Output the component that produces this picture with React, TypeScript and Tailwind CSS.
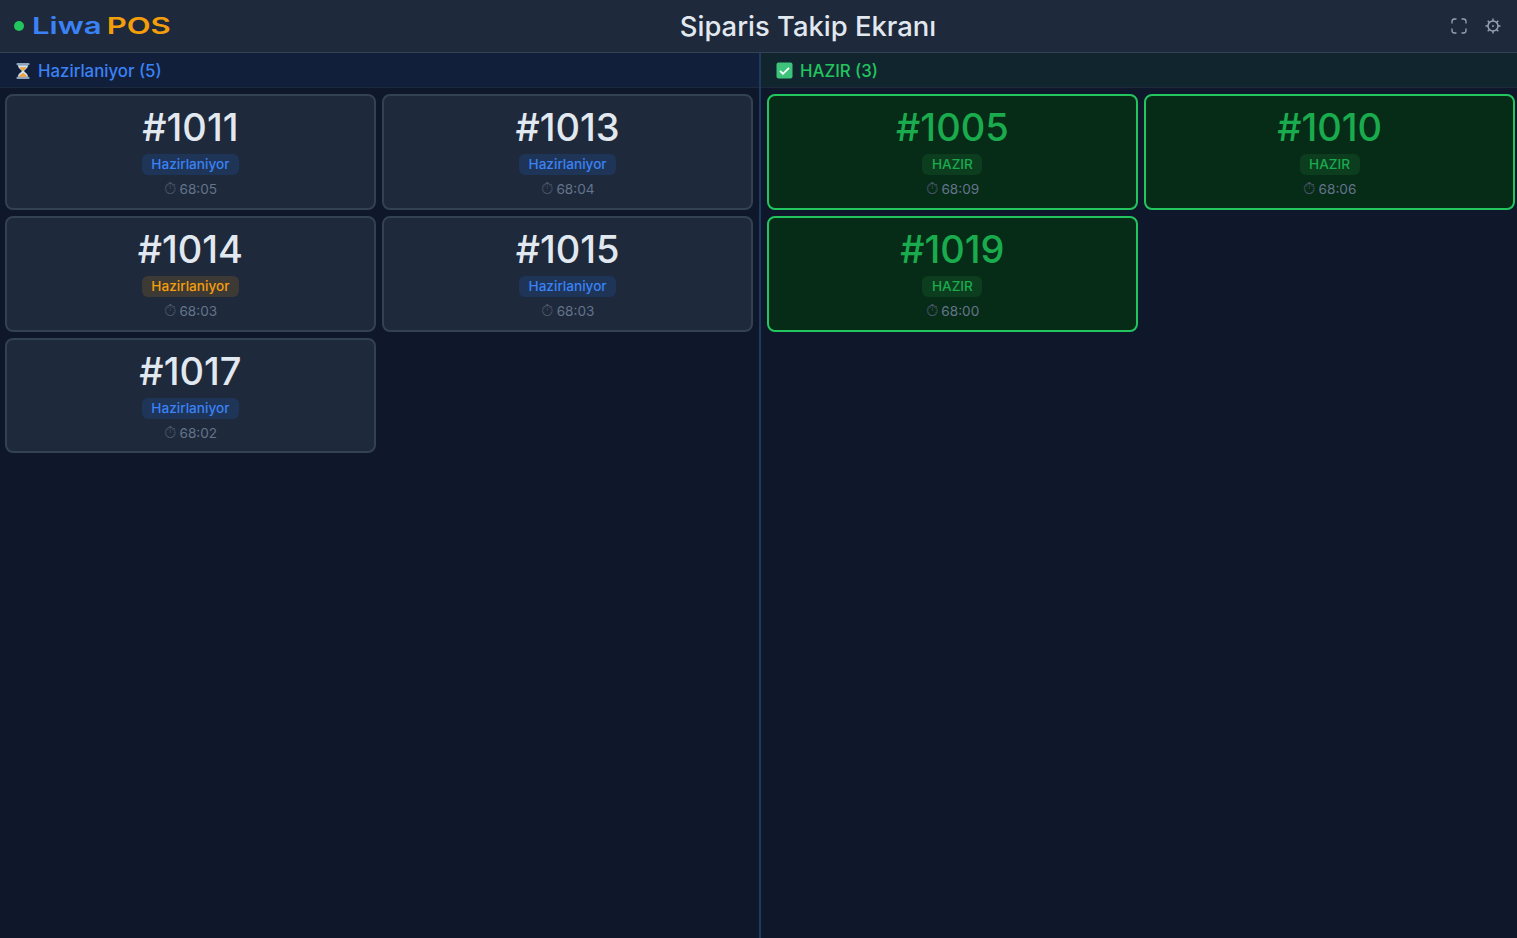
type Order = { no: string; time: string; late?: boolean };

const preparing: Order[] = [
  { no: "#1011", time: "68:05" },
  { no: "#1013", time: "68:04" },
  { no: "#1014", time: "68:03", late: true },
  { no: "#1015", time: "68:03" },
  { no: "#1017", time: "68:02" },
];

const ready: Order[] = [
  { no: "#1005", time: "68:09" },
  { no: "#1010", time: "68:06" },
  { no: "#1019", time: "68:00" },
];

function OrderCard({ order, done }: { order: Order; done?: boolean }) {
  const pill = done
    ? "bg-[#0c3d1e] text-[#1aab4e]"
    : order.late
      ? "bg-[#3d3a35] text-[#f59e0b]"
      : "bg-[#1e3558] text-[#3b82f6]";
  return (
    <div
      className={`flex h-[115.6px] flex-col items-center rounded-lg border-2 pt-[5.8px] ${
        done ? "border-[#22c55e] bg-[#062b16]" : "border-[#334155] bg-[#1e293b]"
      }`}
    >
      <div className={`text-[38px] leading-[50px] font-medium ${done ? "text-[#1aab4e]" : "text-[#e2e8f0]"}`}>
        {order.no}
      </div>
      <div className={`mt-[2.5px] h-[20.8px] rounded-md px-[9.5px] text-[13.6px] leading-[21.8px] font-medium ${pill}`}>
        {done ? "HAZIR" : "Hazirlaniyor"}
      </div>
      <div className="mt-[3.7px] text-[13.6px] leading-5 text-[#64748b]">
        <span className="text-[16px] leading-none text-[#475569]">⏱</span> {order.time}
      </div>
    </div>
  );
}

export default function App() {
  return (
    <div className="flex h-[938px] flex-col overflow-hidden bg-[#0f172a] font-['Inter',sans-serif]">
      {/* Header */}
      <header className="flex h-[53px] items-center justify-between border-b border-[#334155] bg-[#1e293b] pr-[15px] pl-[14px]">
        <div className="flex items-center gap-2">
          <span className="h-[10px] w-[10px] rounded-full bg-[#22c55e]" />
          <span className="inline-block w-[137px] origin-left scale-x-[1.35] text-[23px] leading-none font-semibold whitespace-nowrap [word-spacing:-2px]">
            <span className="text-[#3b82f6]">Liwa</span> <span className="text-[#f59e0b]">POS</span>
          </span>
        </div>
        <h1 className="mt-[2px] -ml-[3px] text-[27.4px] leading-none font-medium text-[#e2e8f0]">Siparis Takip Ekranı</h1>
        <div className="flex items-center gap-4 text-[#94a3b8]">
          <svg width="18" height="18" viewBox="0 0 18 18" fill="none" stroke="currentColor" strokeWidth="1.3" strokeLinecap="round">
            <path d="M2 6V4.5A2.5 2.5 0 0 1 4.5 2H6M12 2h1.5A2.5 2.5 0 0 1 16 4.5V6M16 12v1.5a2.5 2.5 0 0 1-2.5 2.5H12M6 16H4.5A2.5 2.5 0 0 1 2 13.5V12" />
          </svg>
          <svg width="18" height="18" viewBox="0 0 18 18" fill="none" stroke="currentColor">
            <circle cx="9" cy="9" r="5" strokeWidth="1.5" />
            <circle cx="9" cy="9" r="0.9" fill="currentColor" stroke="none" />
            <path d="M9 1.5V4M9 14v2.5M1.5 9H4M14 9h2.5M3.7 3.7l1.8 1.8M12.5 12.5l1.8 1.8M3.7 14.3l1.8-1.8M12.5 5.5l1.8-1.8" strokeWidth="1.4" />
          </svg>
        </div>
      </header>

      <div className="flex flex-1">
        {/* Hazirlaniyor */}
        <section className="w-[761px] border-r-2 border-[#1e3a5f]">
          <div className="flex h-[35px] items-center gap-[7px] border-b border-[#1e293b] bg-[#111f3b] pl-[15px] text-[16.8px] font-medium text-[#3b82f6]">
            <svg className="mt-px" width="16" height="18" viewBox="0 0 16 18">
              <rect x="1.5" y="1" width="13" height="2.2" rx="0.8" fill="#8ea4bd" />
              <rect x="1.5" y="14.8" width="13" height="2.2" rx="0.8" fill="#8ea4bd" />
              <path d="M3 3.2h10c0 3-3 4.2-4 5.8 1 1.6 4 2.8 4 5.8H3c0-3 3-4.2 4-5.8-1-1.6-4-2.8-4-5.8z" fill="#cfe3f2" />
              <path d="M4.4 5.2h7.2c-.6 1.6-2.6 2.5-3.6 3.8-1-1.3-3-2.2-3.6-3.8zM4 14.8c.4-1.8 2.6-2.8 4-4 1.4 1.2 3.6 2.2 4 4z" fill="#f0a23c" />
            </svg>
            <span className="pt-[3px]">Hazirlaniyor (5)</span>
          </div>
          <div className="grid grid-cols-[370.8px_370.8px] gap-x-[6.4px] gap-y-[6.2px] pt-[6.2px] pl-[5px]">
            {preparing.map((o) => (
              <OrderCard key={o.no} order={o} />
            ))}
          </div>
        </section>

        {/* Hazir */}
        <section className="flex-1">
          <div className="flex h-[35px] items-center gap-[7px] border-b border-[#1e293b] bg-[#11252e] pl-[15px] text-[16.8px] font-medium text-[#22c55e]">
            <svg className="mt-px" width="17" height="17" viewBox="0 0 17 17">
              <rect x="0.5" y="0.5" width="16" height="16" rx="2" fill="#3ec47a" />
              <path d="M4 8.8l3 3 6-6" fill="none" stroke="#fff" strokeWidth="1.8" />
            </svg>
            <span className="pt-[3px]">HAZIR (3)</span>
          </div>
          <div className="grid grid-cols-[370.8px_370.8px] gap-x-[6.4px] gap-y-[6.2px] pt-[6.2px] pl-[6px]">
            {ready.map((o) => (
              <OrderCard key={o.no} order={o} done />
            ))}
          </div>
        </section>
      </div>
    </div>
  );
}
